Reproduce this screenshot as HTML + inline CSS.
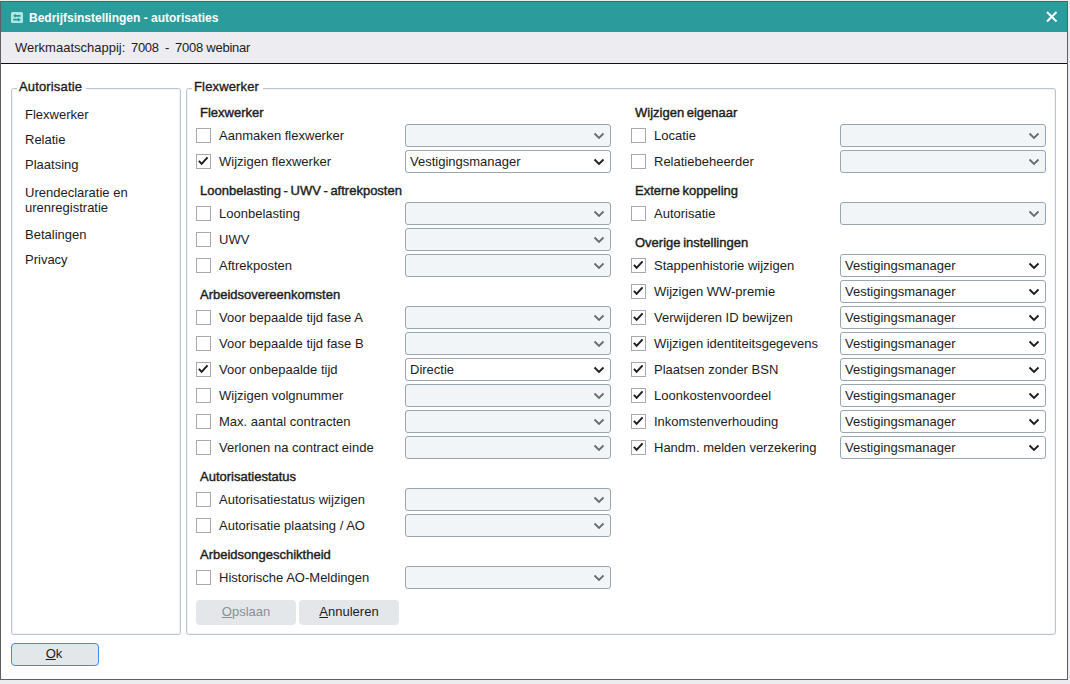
<!DOCTYPE html>
<html><head><meta charset="utf-8">
<style>
*{box-sizing:border-box;margin:0;padding:0}
html,body{width:1070px;height:684px;overflow:hidden;background:#ebebf0;font-family:"Liberation Sans",sans-serif;font-size:13px;color:#1c1c1c}
.win{position:absolute;left:0;top:1px;width:1068px;height:679px;border:1px solid #5f5f5f;background:#fff}
.a{position:absolute;left:-1px;top:-2px;width:1070px;height:684px}
.title{position:absolute;left:0;top:0;width:1066px;height:30px;background:#2c9b9c;color:#fff;font-weight:bold;font-size:12px}
.title .t{position:absolute;left:28px;top:9px;line-height:14px}
.title .ic{position:absolute;left:10px;top:10px}
.title .x{position:absolute;left:1045px;top:9px}
.sub{position:absolute;left:0;top:31px;width:1066px;height:32px;background:#ececf1;border-bottom:1px solid #111}
.sub .t{position:absolute;left:14px;top:9px;line-height:14px}
.fs{position:absolute;border:1px solid #bcc5cc;border-radius:2.5px;box-shadow:inset 0 0 0 1px #f1f3f5}
.legend{position:absolute;top:-9px;background:#fff;padding:0 4px 0 2px;font-size:13px;line-height:14px;letter-spacing:0.15px;-webkit-text-stroke:0.35px #1c1c1c}
.nav{position:absolute;left:25px;line-height:15px}
.h{position:absolute;font-size:13px;line-height:14px;-webkit-text-stroke:0.4px #1c1c1c;word-spacing:-1px;white-space:nowrap}
.cb{position:absolute;width:15px;height:15px;border:1px solid #a9a9a9;background:#fff}
.ck{position:absolute;left:0;top:0}
.lbl{position:absolute;white-space:nowrap;line-height:15px}
.sel{position:absolute;width:206px;height:23px;border:1px solid #9aa6ae;border-radius:3px;background:#f1f5f8}
.sel.on{background:#fff}
.sel .v{position:absolute;left:4px;top:3px;line-height:15px}
.chev{position:absolute;right:4.6px;top:7.3px}
.btn{position:absolute;height:25px;background:#e3e7ea;border-radius:4px;text-align:center;line-height:23px}
u{text-decoration:underline}
</style></head><body>
<div class="win"><div class="a">
  <div class="title" style="left:1px;top:2px"><svg class="ic" width="12" height="11" viewBox="0 0 12 11"><rect x="0" y="0" width="12" height="11" rx="1.5" fill="#aee8e4"/><path d="M4 3.8H9.6M2.2 7.7H8" stroke="#2a9899" stroke-width="1.7" fill="none"/><path d="M2 3.8L4.8 1.8V5.8Z M9.8 7.7L7 5.7V9.7Z" fill="#2a9899"/></svg><div class="t">Bedrijfsinstellingen - autorisaties</div>
  <svg class="x" width="12" height="12" viewBox="0 0 12 12"><path d="M1 1L10.5 10.5M10.5 1L1 10.5" stroke="#fff" stroke-width="2"/></svg></div>
  <div class="sub" style="left:1px;top:32px"><div class="t">Werkmaatschappij:</div><div class="t" style="left:130px;letter-spacing:-0.3px">7008</div><div class="t" style="left:164px">-</div><div class="t" style="left:174px;letter-spacing:-0.25px">7008 webinar</div></div>
  <div class="fs" style="left:11px;top:88px;width:170px;height:547px">
    <div class="legend" style="left:5px">Autorisatie</div>
  </div>
  <div class="fs" style="left:186px;top:88px;width:870px;height:547px">
    <div class="legend" style="left:5px">Flexwerker</div>
  </div>
<div class="nav" style="top:107px">Flexwerker</div>
<div class="nav" style="top:132px">Relatie</div>
<div class="nav" style="top:157px">Plaatsing</div>
<div class="nav" style="top:185px">Urendeclaratie en<br>urenregistratie</div>
<div class="nav" style="top:227px">Betalingen</div>
<div class="nav" style="top:252px">Privacy</div>
<div class="h" style="left:200px;top:106px">Flexwerker</div>
<div class="cb" style="left:196px;top:128px"></div><div class="lbl" style="left:219px;top:128px">Aanmaken flexwerker</div><div class="sel" style="left:405px;top:124px"><svg class="chev" width="12" height="8" viewBox="0 0 12 8"><path d="M1.5 1.5L6 6L10.5 1.5" fill="none" stroke="#6b6b6b" stroke-width="1.8"/></svg></div>
<div class="cb" style="left:196px;top:154px"><svg class="ck" width="13" height="13" viewBox="0 0 13 13"><path d="M1.9 5.9L4.6 8.9L10.6 2.3" fill="none" stroke="#1b1b1b" stroke-width="1.9"/></svg></div><div class="lbl" style="left:219px;top:154px">Wijzigen flexwerker</div><div class="sel on" style="left:405px;top:150px"><span class=v>Vestigingsmanager</span><svg class="chev" width="12" height="8" viewBox="0 0 12 8"><path d="M1.5 1.5L6 6L10.5 1.5" fill="none" stroke="#1b1b1b" stroke-width="1.8"/></svg></div>
<div class="h" style="left:200px;top:184px">Loonbelasting - UWV - aftrekposten</div>
<div class="cb" style="left:196px;top:206px"></div><div class="lbl" style="left:219px;top:206px">Loonbelasting</div><div class="sel" style="left:405px;top:202px"><svg class="chev" width="12" height="8" viewBox="0 0 12 8"><path d="M1.5 1.5L6 6L10.5 1.5" fill="none" stroke="#6b6b6b" stroke-width="1.8"/></svg></div>
<div class="cb" style="left:196px;top:232px"></div><div class="lbl" style="left:219px;top:232px">UWV</div><div class="sel" style="left:405px;top:228px"><svg class="chev" width="12" height="8" viewBox="0 0 12 8"><path d="M1.5 1.5L6 6L10.5 1.5" fill="none" stroke="#6b6b6b" stroke-width="1.8"/></svg></div>
<div class="cb" style="left:196px;top:258px"></div><div class="lbl" style="left:219px;top:258px">Aftrekposten</div><div class="sel" style="left:405px;top:254px"><svg class="chev" width="12" height="8" viewBox="0 0 12 8"><path d="M1.5 1.5L6 6L10.5 1.5" fill="none" stroke="#6b6b6b" stroke-width="1.8"/></svg></div>
<div class="h" style="left:200px;top:288px">Arbeidsovereenkomsten</div>
<div class="cb" style="left:196px;top:310px"></div><div class="lbl" style="left:219px;top:310px">Voor bepaalde tijd fase A</div><div class="sel" style="left:405px;top:306px"><svg class="chev" width="12" height="8" viewBox="0 0 12 8"><path d="M1.5 1.5L6 6L10.5 1.5" fill="none" stroke="#6b6b6b" stroke-width="1.8"/></svg></div>
<div class="cb" style="left:196px;top:336px"></div><div class="lbl" style="left:219px;top:336px">Voor bepaalde tijd fase B</div><div class="sel" style="left:405px;top:332px"><svg class="chev" width="12" height="8" viewBox="0 0 12 8"><path d="M1.5 1.5L6 6L10.5 1.5" fill="none" stroke="#6b6b6b" stroke-width="1.8"/></svg></div>
<div class="cb" style="left:196px;top:362px"><svg class="ck" width="13" height="13" viewBox="0 0 13 13"><path d="M1.9 5.9L4.6 8.9L10.6 2.3" fill="none" stroke="#1b1b1b" stroke-width="1.9"/></svg></div><div class="lbl" style="left:219px;top:362px">Voor onbepaalde tijd</div><div class="sel on" style="left:405px;top:358px"><span class=v>Directie</span><svg class="chev" width="12" height="8" viewBox="0 0 12 8"><path d="M1.5 1.5L6 6L10.5 1.5" fill="none" stroke="#1b1b1b" stroke-width="1.8"/></svg></div>
<div class="cb" style="left:196px;top:388px"></div><div class="lbl" style="left:219px;top:388px">Wijzigen volgnummer</div><div class="sel" style="left:405px;top:384px"><svg class="chev" width="12" height="8" viewBox="0 0 12 8"><path d="M1.5 1.5L6 6L10.5 1.5" fill="none" stroke="#6b6b6b" stroke-width="1.8"/></svg></div>
<div class="cb" style="left:196px;top:414px"></div><div class="lbl" style="left:219px;top:414px">Max. aantal contracten</div><div class="sel" style="left:405px;top:410px"><svg class="chev" width="12" height="8" viewBox="0 0 12 8"><path d="M1.5 1.5L6 6L10.5 1.5" fill="none" stroke="#6b6b6b" stroke-width="1.8"/></svg></div>
<div class="cb" style="left:196px;top:440px"></div><div class="lbl" style="left:219px;top:440px">Verlonen na contract einde</div><div class="sel" style="left:405px;top:436px"><svg class="chev" width="12" height="8" viewBox="0 0 12 8"><path d="M1.5 1.5L6 6L10.5 1.5" fill="none" stroke="#6b6b6b" stroke-width="1.8"/></svg></div>
<div class="h" style="left:200px;top:470px">Autorisatiestatus</div>
<div class="cb" style="left:196px;top:492px"></div><div class="lbl" style="left:219px;top:492px">Autorisatiestatus wijzigen</div><div class="sel" style="left:405px;top:488px"><svg class="chev" width="12" height="8" viewBox="0 0 12 8"><path d="M1.5 1.5L6 6L10.5 1.5" fill="none" stroke="#6b6b6b" stroke-width="1.8"/></svg></div>
<div class="cb" style="left:196px;top:518px"></div><div class="lbl" style="left:219px;top:518px">Autorisatie plaatsing / AO</div><div class="sel" style="left:405px;top:514px"><svg class="chev" width="12" height="8" viewBox="0 0 12 8"><path d="M1.5 1.5L6 6L10.5 1.5" fill="none" stroke="#6b6b6b" stroke-width="1.8"/></svg></div>
<div class="h" style="left:200px;top:548px">Arbeidsongeschiktheid</div>
<div class="cb" style="left:196px;top:570px"></div><div class="lbl" style="left:219px;top:570px">Historische AO-Meldingen</div><div class="sel" style="left:405px;top:566px"><svg class="chev" width="12" height="8" viewBox="0 0 12 8"><path d="M1.5 1.5L6 6L10.5 1.5" fill="none" stroke="#6b6b6b" stroke-width="1.8"/></svg></div>
<div class="h" style="left:635px;top:106px">Wijzigen eigenaar</div>
<div class="cb" style="left:631px;top:128px"></div><div class="lbl" style="left:654px;top:128px">Locatie</div><div class="sel" style="left:840px;top:124px"><svg class="chev" width="12" height="8" viewBox="0 0 12 8"><path d="M1.5 1.5L6 6L10.5 1.5" fill="none" stroke="#6b6b6b" stroke-width="1.8"/></svg></div>
<div class="cb" style="left:631px;top:154px"></div><div class="lbl" style="left:654px;top:154px">Relatiebeheerder</div><div class="sel" style="left:840px;top:150px"><svg class="chev" width="12" height="8" viewBox="0 0 12 8"><path d="M1.5 1.5L6 6L10.5 1.5" fill="none" stroke="#6b6b6b" stroke-width="1.8"/></svg></div>
<div class="h" style="left:635px;top:184px">Externe koppeling</div>
<div class="cb" style="left:631px;top:206px"></div><div class="lbl" style="left:654px;top:206px">Autorisatie</div><div class="sel" style="left:840px;top:202px"><svg class="chev" width="12" height="8" viewBox="0 0 12 8"><path d="M1.5 1.5L6 6L10.5 1.5" fill="none" stroke="#6b6b6b" stroke-width="1.8"/></svg></div>
<div class="h" style="left:635px;top:236px">Overige instellingen</div>
<div class="cb" style="left:631px;top:258px"><svg class="ck" width="13" height="13" viewBox="0 0 13 13"><path d="M1.9 5.9L4.6 8.9L10.6 2.3" fill="none" stroke="#1b1b1b" stroke-width="1.9"/></svg></div><div class="lbl" style="left:654px;top:258px">Stappenhistorie wijzigen</div><div class="sel on" style="left:840px;top:254px"><span class=v>Vestigingsmanager</span><svg class="chev" width="12" height="8" viewBox="0 0 12 8"><path d="M1.5 1.5L6 6L10.5 1.5" fill="none" stroke="#1b1b1b" stroke-width="1.8"/></svg></div>
<div class="cb" style="left:631px;top:284px"><svg class="ck" width="13" height="13" viewBox="0 0 13 13"><path d="M1.9 5.9L4.6 8.9L10.6 2.3" fill="none" stroke="#1b1b1b" stroke-width="1.9"/></svg></div><div class="lbl" style="left:654px;top:284px">Wijzigen WW-premie</div><div class="sel on" style="left:840px;top:280px"><span class=v>Vestigingsmanager</span><svg class="chev" width="12" height="8" viewBox="0 0 12 8"><path d="M1.5 1.5L6 6L10.5 1.5" fill="none" stroke="#1b1b1b" stroke-width="1.8"/></svg></div>
<div class="cb" style="left:631px;top:310px"><svg class="ck" width="13" height="13" viewBox="0 0 13 13"><path d="M1.9 5.9L4.6 8.9L10.6 2.3" fill="none" stroke="#1b1b1b" stroke-width="1.9"/></svg></div><div class="lbl" style="left:654px;top:310px">Verwijderen ID bewijzen</div><div class="sel on" style="left:840px;top:306px"><span class=v>Vestigingsmanager</span><svg class="chev" width="12" height="8" viewBox="0 0 12 8"><path d="M1.5 1.5L6 6L10.5 1.5" fill="none" stroke="#1b1b1b" stroke-width="1.8"/></svg></div>
<div class="cb" style="left:631px;top:336px"><svg class="ck" width="13" height="13" viewBox="0 0 13 13"><path d="M1.9 5.9L4.6 8.9L10.6 2.3" fill="none" stroke="#1b1b1b" stroke-width="1.9"/></svg></div><div class="lbl" style="left:654px;top:336px">Wijzigen identiteitsgegevens</div><div class="sel on" style="left:840px;top:332px"><span class=v>Vestigingsmanager</span><svg class="chev" width="12" height="8" viewBox="0 0 12 8"><path d="M1.5 1.5L6 6L10.5 1.5" fill="none" stroke="#1b1b1b" stroke-width="1.8"/></svg></div>
<div class="cb" style="left:631px;top:362px"><svg class="ck" width="13" height="13" viewBox="0 0 13 13"><path d="M1.9 5.9L4.6 8.9L10.6 2.3" fill="none" stroke="#1b1b1b" stroke-width="1.9"/></svg></div><div class="lbl" style="left:654px;top:362px">Plaatsen zonder BSN</div><div class="sel on" style="left:840px;top:358px"><span class=v>Vestigingsmanager</span><svg class="chev" width="12" height="8" viewBox="0 0 12 8"><path d="M1.5 1.5L6 6L10.5 1.5" fill="none" stroke="#1b1b1b" stroke-width="1.8"/></svg></div>
<div class="cb" style="left:631px;top:388px"><svg class="ck" width="13" height="13" viewBox="0 0 13 13"><path d="M1.9 5.9L4.6 8.9L10.6 2.3" fill="none" stroke="#1b1b1b" stroke-width="1.9"/></svg></div><div class="lbl" style="left:654px;top:388px">Loonkostenvoordeel</div><div class="sel on" style="left:840px;top:384px"><span class=v>Vestigingsmanager</span><svg class="chev" width="12" height="8" viewBox="0 0 12 8"><path d="M1.5 1.5L6 6L10.5 1.5" fill="none" stroke="#1b1b1b" stroke-width="1.8"/></svg></div>
<div class="cb" style="left:631px;top:414px"><svg class="ck" width="13" height="13" viewBox="0 0 13 13"><path d="M1.9 5.9L4.6 8.9L10.6 2.3" fill="none" stroke="#1b1b1b" stroke-width="1.9"/></svg></div><div class="lbl" style="left:654px;top:414px">Inkomstenverhouding</div><div class="sel on" style="left:840px;top:410px"><span class=v>Vestigingsmanager</span><svg class="chev" width="12" height="8" viewBox="0 0 12 8"><path d="M1.5 1.5L6 6L10.5 1.5" fill="none" stroke="#1b1b1b" stroke-width="1.8"/></svg></div>
<div class="cb" style="left:631px;top:440px"><svg class="ck" width="13" height="13" viewBox="0 0 13 13"><path d="M1.9 5.9L4.6 8.9L10.6 2.3" fill="none" stroke="#1b1b1b" stroke-width="1.9"/></svg></div><div class="lbl" style="left:654px;top:440px">Handm. melden verzekering</div><div class="sel on" style="left:840px;top:436px"><span class=v>Vestigingsmanager</span><svg class="chev" width="12" height="8" viewBox="0 0 12 8"><path d="M1.5 1.5L6 6L10.5 1.5" fill="none" stroke="#1b1b1b" stroke-width="1.8"/></svg></div>
  <div class="btn" style="left:196px;top:600px;width:100px;color:#8a8f93"><u>O</u>pslaan</div>
  <div class="btn" style="left:299px;top:600px;width:100px"><u>A</u>nnuleren</div>
  <div class="btn" style="left:11px;top:643px;width:88px;height:23px;line-height:20px;border:1px solid #3d8bf5;text-indent:-2px"><u>O</u>k</div>
</div></div>
</body></html>
